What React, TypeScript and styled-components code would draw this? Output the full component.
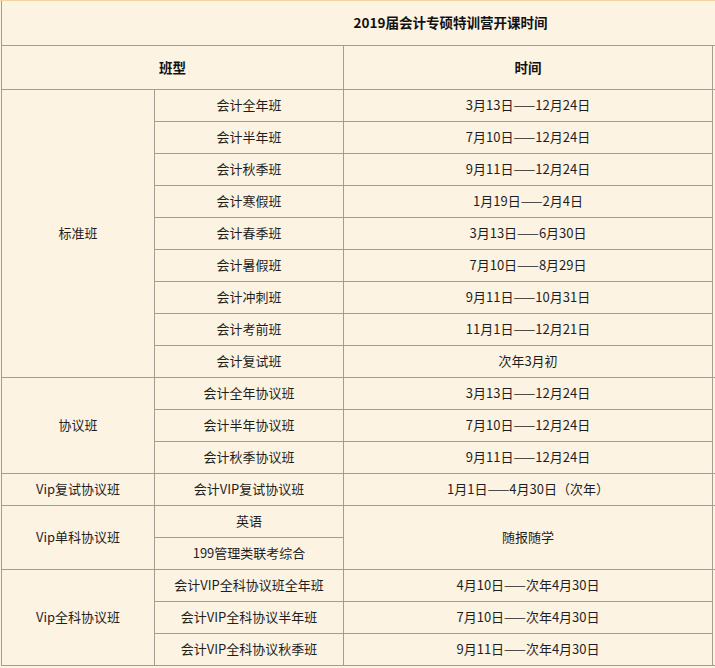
import styled, { createGlobalStyle } from "styled-components";

const GlobalStyle = createGlobalStyle`
  html, body {
    margin: 0;
    padding: 0;
    background: #ffffff;
    overflow: hidden;
  }
  body {
    font-family: "Noto Sans CJK SC", "Noto Sans", sans-serif;
    color: #1e1e1e;
  }
`;

type Row = { course: string; time?: string; timeSpan?: number };
type Group = { name: string; rows: Row[] };

const GROUPS: Group[] = [
  {
    name: "标准班",
    rows: [
      { course: "会计全年班", time: "3月13日——12月24日" },
      { course: "会计半年班", time: "7月10日——12月24日" },
      { course: "会计秋季班", time: "9月11日——12月24日" },
      { course: "会计寒假班", time: "1月19日——2月4日" },
      { course: "会计春季班", time: "3月13日——6月30日" },
      { course: "会计暑假班", time: "7月10日——8月29日" },
      { course: "会计冲刺班", time: "9月11日——10月31日" },
      { course: "会计考前班", time: "11月1日——12月21日" },
      { course: "会计复试班", time: "次年3月初" },
    ],
  },
  {
    name: "协议班",
    rows: [
      { course: "会计全年协议班", time: "3月13日——12月24日" },
      { course: "会计半年协议班", time: "7月10日——12月24日" },
      { course: "会计秋季协议班", time: "9月11日——12月24日" },
    ],
  },
  {
    name: "Vip复试协议班",
    rows: [{ course: "会计VIP复试协议班", time: "1月1日——4月30日（次年）" }],
  },
  {
    name: "Vip单科协议班",
    rows: [
      { course: "英语", time: "随报随学", timeSpan: 2 },
      { course: "199管理类联考综合" },
    ],
  },
  {
    name: "Vip全科协议班",
    rows: [
      { course: "会计VIP全科协议班全年班", time: "4月10日——次年4月30日" },
      { course: "会计VIP全科协议半年班", time: "7月10日——次年4月30日" },
      { course: "会计VIP全科协议秋季班", time: "9月11日——次年4月30日" },
    ],
  },
];

export default function App() {
  return (
    <>
      <GlobalStyle />
      <Frame>
        <Schedule>
          <colgroup>
            <col style={{ width: 153 }} />
            <col style={{ width: 189 }} />
            <col style={{ width: 369 }} />
            <col style={{ width: 187 }} />
          </colgroup>
          <tbody>
            <tr>
              <TitleCell colSpan={4}>2019届会计专硕特训营开课时间</TitleCell>
            </tr>
            <tr>
              <HeadCell colSpan={2}>班型</HeadCell>
              <HeadCell>时间</HeadCell>
              <HeadCell />
            </tr>
            {GROUPS.map((g) =>
              g.rows.map((r, i) => (
                <tr key={g.name + r.course}>
                  {i === 0 && <Cell rowSpan={g.rows.length}>{g.name}</Cell>}
                  <Cell>{r.course}</Cell>
                  {r.time && <Cell rowSpan={r.timeSpan ?? 1}>{r.time}</Cell>}
                  {i === 0 && <Cell rowSpan={g.rows.length} />}
                </tr>
              ))
            )}
          </tbody>
        </Schedule>
      </Frame>
    </>
  );
}

const Frame = styled.div`
  width: 715px;
  height: 668px;
  overflow: hidden;
  border-top: 1px solid #f3d3a2;
  box-sizing: border-box;
  padding-left: 1px;
  background: #fdf3e2;
`;

const Schedule = styled.table`
  border-collapse: collapse;
  table-layout: fixed;
  width: 898px;
  background: #fdf3e2;
  margin-top: -1px;

  tr {
    height: 32px;
  }
`;

const Cell = styled.td`
  border: 1px solid #a39d94;
  text-align: center;
  vertical-align: middle;
  font-size: 13px;
  line-height: 16px;
  padding: 0 4px 2px;
  white-space: nowrap;
  box-sizing: border-box;
`;

const TitleCell = styled(Cell)`
  height: 45px;
  font-size: 13.5px;
  font-weight: bold;
  color: #111;
  border-top-color: #f3d3a2;
`;

const HeadCell = styled(Cell)`
  height: 44px;
  font-size: 13.5px;
  font-weight: bold;
  color: #111;
`;
